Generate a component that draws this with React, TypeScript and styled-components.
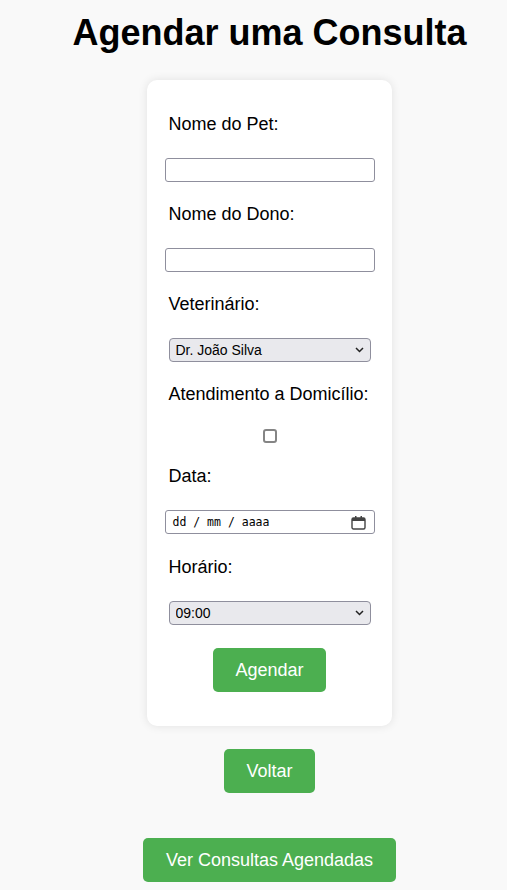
import React from "react";
import styled, { createGlobalStyle } from "styled-components";

const GlobalStyle = createGlobalStyle`
  html, body {
    margin: 0;
    padding: 0;
    background: #f9f9f9;
  }
  body {
    font-family: "Liberation Sans", Arial, sans-serif;
    color: #000;
  }
  * { box-sizing: border-box; }
`;

const Page = styled.div`
  display: flex;
  flex-direction: column;
  align-items: center;
  padding: 12px 0 8px 32px;
`;

const Title = styled.h1`
  margin: 0;
  font-size: 36px;
  line-height: 42px;
  font-weight: 700;
`;

const Card = styled.form`
  margin-top: 26px;
  width: 245px;
  background: #fff;
  border-radius: 10px;
  box-shadow: 0 0 10px rgba(0, 0, 0, 0.1);
  padding: 34px 17.5px 34px;
  display: flex;
  flex-direction: column;
`;

const Field = styled.div<{ $gap?: number }>`
  display: flex;
  flex-direction: column;
  margin-top: ${(p) => p.$gap ?? 22}px;
  &:first-child { margin-top: 0; }
`;

const Label = styled.label`
  display: block;
  font-size: 18px;
  line-height: 21px;
  padding-left: 4px;
  margin-bottom: 23px;
`;

const TextInput = styled.input`
  width: 210px;
  height: 24px;
  border: 1px solid #8f8f9d;
  border-radius: 3px;
  background: #fff;
  padding: 0 4px;
  font-family: "Liberation Sans", Arial, sans-serif;
  font-size: 14px;
  outline: none;
`;

const SelectWrap = styled.div`
  position: relative;
  align-self: center;
  width: 202px;
  height: 24px;
`;

const Select = styled.select`
  appearance: none;
  -webkit-appearance: none;
  width: 100%;
  height: 24px;
  border: 1px solid #8f8f9d;
  border-radius: 4px;
  background: #e9e9ed;
  color: #000;
  padding: 0 20px 0 6px;
  font-family: "Liberation Sans", Arial, sans-serif;
  font-size: 14px;
  outline: none;
`;

const Chevron = styled.svg`
  position: absolute;
  right: 7px;
  top: 9px;
  pointer-events: none;
`;

const CheckRow = styled.div`
  display: flex;
  justify-content: center;
  margin-top: 1px;
`;

const Check = styled.input`
  appearance: none;
  -webkit-appearance: none;
  width: 14px;
  height: 14px;
  margin: 0;
  border: 2px solid #858585;
  border-radius: 3px;
  background: #fff;
`;

const DateBox = styled.div`
  width: 210px;
  height: 24px;
  border: 1px solid #8f8f9d;
  border-radius: 3px;
  background: #fff;
  display: flex;
  align-items: center;
  justify-content: space-between;
  padding: 0 8px 0 7px;
`;

const DateText = styled.span`
  font-family: "DejaVu Sans Mono", "Liberation Mono", monospace;
  font-size: 11.5px;
  color: #000;
`;

const GreenButton = styled.button<{ $mt: number }>`
  margin-top: ${(p) => p.$mt}px;
  align-self: center;
  height: 44px;
  padding: 0 22.5px;
  border: none;
  border-radius: 5px;
  background: #4caf50;
  color: #fff;
  font-family: "Liberation Sans", Arial, sans-serif;
  font-size: 18px;
  line-height: 44px;
  cursor: pointer;
`;

const ChevronIcon = () => (
  <Chevron width="9" height="6" viewBox="0 0 9 6">
    <path d="M1 1 L4.5 4.5 L8 1" fill="none" stroke="#222" strokeWidth="1.5" />
  </Chevron>
);

const CalendarIcon = () => (
  <svg width="15" height="15" viewBox="0 0 15 15">
    <rect x="1" y="3" width="13" height="11" rx="1.5" fill="none" stroke="#444" strokeWidth="1.4" />
    <rect x="1" y="3" width="13" height="3" fill="#444" />
    <rect x="4" y="1" width="1.5" height="3" fill="#444" />
    <rect x="9.5" y="1" width="1.5" height="3" fill="#444" />
  </svg>
);

export default function App() {
  return (
    <>
      <GlobalStyle />
      <Page>
        <Title>Agendar uma Consulta</Title>
        <Card onSubmit={(e) => e.preventDefault()}>
          <Field>
            <Label htmlFor="pet">Nome do Pet:</Label>
            <TextInput id="pet" type="text" />
          </Field>
          <Field>
            <Label htmlFor="dono">Nome do Dono:</Label>
            <TextInput id="dono" type="text" />
          </Field>
          <Field>
            <Label htmlFor="vet">Veterinário:</Label>
            <SelectWrap>
              <Select id="vet" defaultValue="joao">
                <option value="joao">Dr. João Silva</option>
                <option value="maria">Dra. Maria Souza</option>
              </Select>
              <ChevronIcon />
            </SelectWrap>
          </Field>
          <Field>
            <Label htmlFor="dom">Atendimento a Domicílio:</Label>
            <CheckRow>
              <Check id="dom" type="checkbox" />
            </CheckRow>
          </Field>
          <Field $gap={23}>
            <Label>Data:</Label>
            <DateBox>
              <DateText>dd / mm / aaaa</DateText>
              <CalendarIcon />
            </DateBox>
          </Field>
          <Field $gap={23}>
            <Label htmlFor="hora">Horário:</Label>
            <SelectWrap>
              <Select id="hora" defaultValue="09:00">
                <option>09:00</option>
                <option>10:00</option>
                <option>11:00</option>
              </Select>
              <ChevronIcon />
            </SelectWrap>
          </Field>
          <GreenButton type="submit" $mt={23}>Agendar</GreenButton>
        </Card>
        <GreenButton type="button" $mt={23}>Voltar</GreenButton>
        <GreenButton type="button" $mt={45}>Ver Consultas Agendadas</GreenButton>
      </Page>
    </>
  );
}
